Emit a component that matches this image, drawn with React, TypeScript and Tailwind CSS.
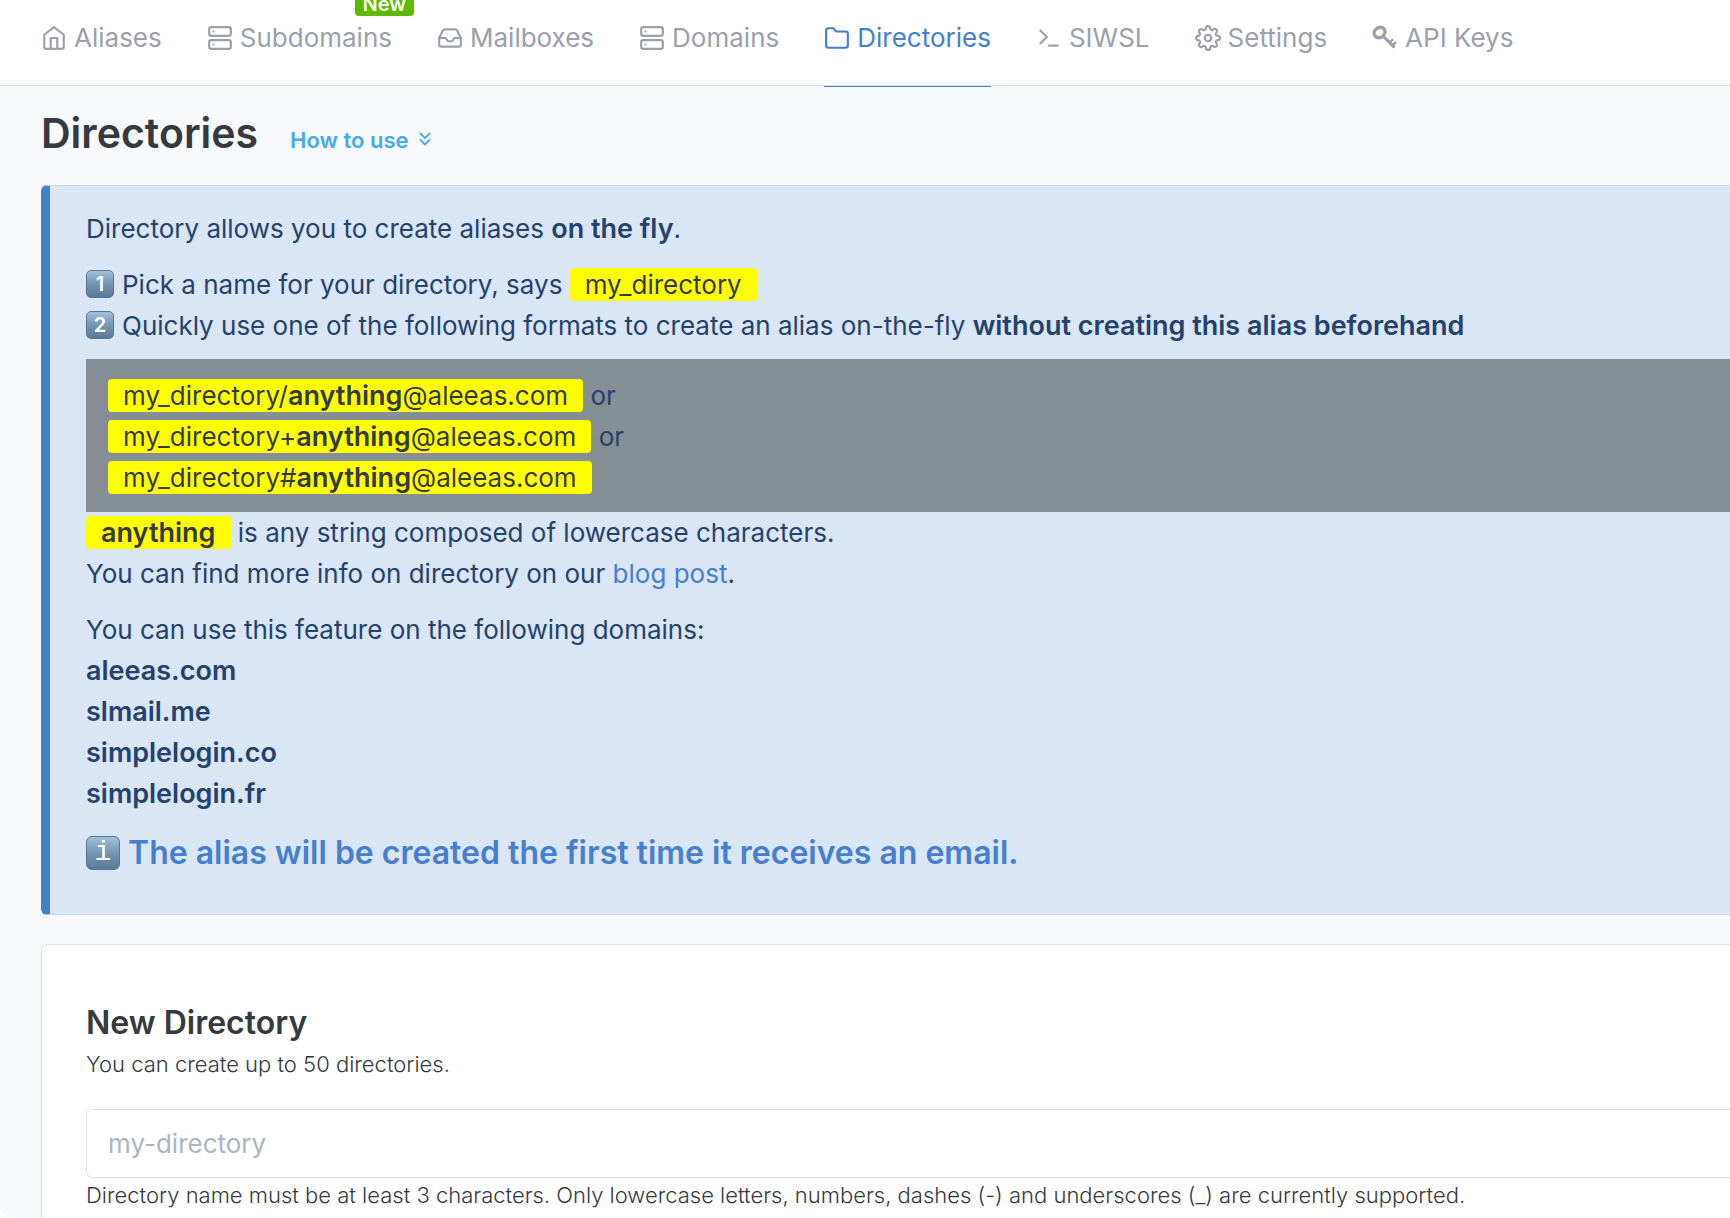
import { ReactNode } from "react";
import clsx from "clsx";
import {
  FiChevronsDown,
  FiFolder,
  FiHome,
  FiInbox,
  FiServer,
  FiSettings,
  FiTerminal,
} from "react-icons/fi";

interface NavItem {
  label: string;
  icon: ReactNode;
  active?: boolean;
  badge?: string;
}

function KeyIcon() {
  return (
    <svg
      viewBox="0 0 24 24"
      fill="none"
      stroke="currentColor"
      strokeWidth="3.2"
      strokeLinecap="round"
      aria-hidden="true"
    >
      <ellipse cx="7" cy="6.9" rx="5.3" ry="4.5" transform="rotate(-40 7 6.9)" />
      <path d="M10.6 10.6 20 20" strokeWidth="2.8" />
      <path d="m16.6 16 2.2-2.2M19.2 18.6l2.4-2.4" strokeWidth="2.2" />
    </svg>
  );
}

const navItems: NavItem[] = [
  { label: "Aliases", icon: <FiHome /> },
  { label: "Subdomains", icon: <FiServer />, badge: "New" },
  { label: "Mailboxes", icon: <FiInbox /> },
  { label: "Domains", icon: <FiServer /> },
  { label: "Directories", icon: <FiFolder />, active: true },
  { label: "SIWSL", icon: <FiTerminal /> },
  { label: "Settings", icon: <FiSettings /> },
  { label: "API Keys", icon: <KeyIcon /> },
];

const separators = ["/", "+", "#"];

const domains = ["aleeas.com", "slmail.me", "simplelogin.co", "simplelogin.fr"];

function NavBar() {
  return (
    <header className="border-b border-[#dee2e9] bg-white px-[41px]">
      <nav className="flex gap-[45px]">
        {navItems.map((item) => (
          <a
            key={item.label}
            href="#"
            className={clsx(
              "relative -mb-0.5 flex h-[87px] items-start gap-[7px] border-b pt-[17px] leading-[41px] whitespace-nowrap",
              item.active
                ? "border-[#467fcf] text-[#467fcf]"
                : "border-transparent text-[#9aa0ac]",
            )}
          >
            <span className="flex h-[41px] items-center [&>svg]:size-[26px]">
              {item.icon}
            </span>
            {item.label}
            {item.badge && (
              <span className="absolute -top-2 right-[-22px] rounded bg-[#5eba00] px-2 text-[20px] leading-6 font-semibold text-white">
                {item.badge}
              </span>
            )}
          </a>
        ))}
      </nav>
    </header>
  );
}

function Keycap({ children, large }: { children: string; large?: boolean }) {
  return (
    <span
      className={clsx(
        "mr-2 inline-flex items-center justify-center border border-[#587792] bg-linear-to-b from-[#a3c0d8] via-[#7396b1] to-[#5b7994] leading-none text-white",
        large
          ? "size-[34px] rounded-md align-[4px] font-['Liberation_Mono',monospace] text-[28px] font-normal"
          : "size-7 rounded-[5px] align-[3px] text-[20px] font-semibold",
      )}
    >
      {children}
    </span>
  );
}

function Highlight({ children }: { children: ReactNode }) {
  return (
    <em className="rounded bg-[#ffff00] px-[15px] py-px text-[#343a40] not-italic">
      {children}
    </em>
  );
}

function Strong({ children }: { children: ReactNode }) {
  return (
    <strong className="text-[27px] leading-none font-semibold">
      {children}
    </strong>
  );
}

function HowToUse() {
  return (
    <section className="mt-[27px] rounded-l-md border-y border-l-[9px] border-y-[#c8d7ee] border-l-[#467fcf] bg-[#dae5f5] pt-[22px] pb-[41px] pl-9 leading-[41px] text-[#24426c]">
      <p className="mb-[15px]">
        Directory allows you to create aliases <Strong>on the fly</Strong>.
      </p>
      <p>
        <Keycap>1</Keycap>
        Pick a name for your directory, says <Highlight>my_directory</Highlight>
      </p>
      <p>
        <Keycap>2</Keycap>
        Quickly use one of the following formats to create an alias on-the-fly{" "}
        <Strong>without creating this alias beforehand</Strong>
      </p>
      <div className="mt-[13px] bg-[#868e96] px-[22px] pt-4 pb-[14px]">
        {separators.map((separator, i) => (
          <p key={separator}>
            <Highlight>
              my_directory{separator}
              <Strong>anything</Strong>@aleeas.com
            </Highlight>
            {i < separators.length - 1 && " or"}
          </p>
        ))}
      </div>
      <p>
        <Highlight>
          <Strong>anything</Strong>
        </Highlight>{" "}
        is any string composed of lowercase characters.
      </p>
      <p className="mb-[15px]">
        You can find more info on directory on our{" "}
        <a href="#" className="text-[#467fcf]">
          blog post
        </a>
        .
      </p>
      <p>You can use this feature on the following domains:</p>
      <ul>
        {domains.map((domain) => (
          <li key={domain}>
            <Strong>{domain}</Strong>
          </li>
        ))}
      </ul>
      <p className="mt-[18px] text-[32px] font-semibold text-[#467fcf]">
        <Keycap large>i</Keycap>
        The alias will be created the first time it receives an email.
      </p>
    </section>
  );
}

function NewDirectory() {
  return (
    <section className="mt-[29px] flex-1 rounded-tl-md border-t border-l border-[#dee2e9] bg-white pt-[57px] pl-11">
      <h2 className="text-[32px] leading-[41px] font-semibold">New Directory</h2>
      <p id="limit" className="text-[22px] leading-[43px] font-light">
        You can create up to 50 directories.
      </p>
      <input
        type="text"
        aria-label="Directory name"
        aria-describedby="limit rules"
        placeholder="my-directory"
        className="mt-[23px] block h-[69px] w-full rounded-l-md border border-r-0 border-[#dee2e9] px-[21px] placeholder:text-[#adb5bd]"
      />
      <p id="rules" className="text-[22px] leading-[34px] font-light">
        Directory name must be at least 3 characters. Only lowercase letters,
        numbers, dashes (-) and underscores (_) are currently supported.
      </p>
    </section>
  );
}

export default function App() {
  return (
    <div className="flex min-h-screen flex-col overflow-hidden rounded-bl-xl bg-[#f8f9fb] font-[Inter,sans-serif] text-[26px] text-[#343a40]">
      <NavBar />
      <main className="flex flex-1 flex-col pl-[41px]">
        <div className="flex items-baseline gap-8 pt-[22px]">
          <h1 className="text-[41px] leading-[50px] font-semibold">
            Directories
          </h1>
          <button
            type="button"
            className="text-[22px] leading-8 font-semibold text-[#45aaf2]"
          >
            How to use{" "}
            <FiChevronsDown className="inline-block size-[22px] align-[-2px]" />
          </button>
        </div>
        <HowToUse />
        <NewDirectory />
      </main>
    </div>
  );
}
